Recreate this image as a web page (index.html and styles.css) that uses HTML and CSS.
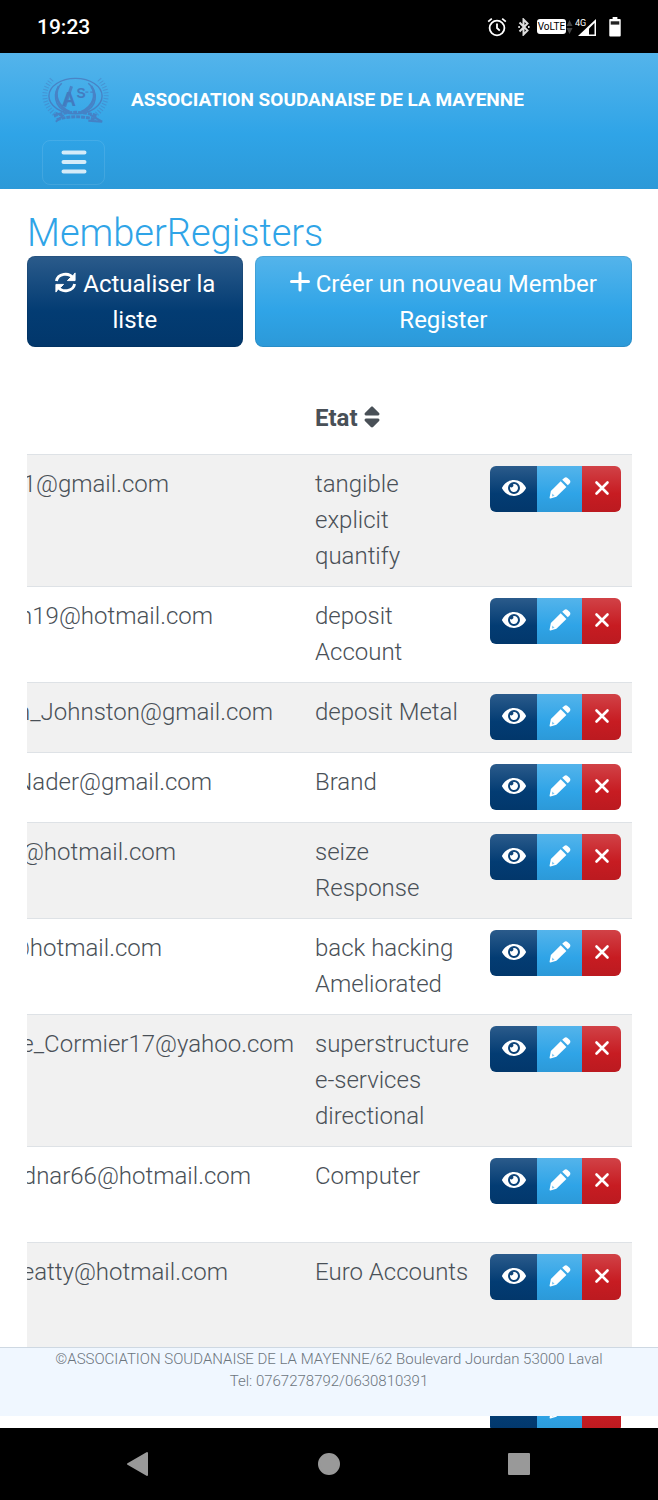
FILE: index.html
```html
<!DOCTYPE html>
<html lang="fr">
<head>
<meta charset="utf-8">
<meta name="viewport" content="width=device-width, initial-scale=1">
<title>MemberRegisters</title>
<link rel="stylesheet" href="styles.css">
</head>
<body>
<svg class="sprite" aria-hidden="true">
  <symbol id="eye" viewBox="0 0 576 512"><path d="M572.52 241.4C518.29 135.59 410.93 64 288 64S57.68 135.64 3.48 241.41a32.35 32.35 0 0 0 0 29.19C57.71 376.41 165.07 448 288 448s230.32-71.64 284.52-177.41a32.35 32.35 0 0 0 0-29.19zM288 400a144 144 0 1 1 144-144 143.93 143.93 0 0 1-144 144zm0-240a95.31 95.31 0 0 0-25.31 3.79 47.85 47.85 0 0 1-66.9 66.9A95.78 95.78 0 1 0 288 160z"/></symbol>
  <symbol id="pencil" viewBox="0 0 22 22"><path d="M11.700 4.200L17.400 9.900 7.400 19.700 1.500 21.500Q.4 21.600.6 20.400L1.900 14z"/><path d="M13.200 2.800L15.200.9q1.700-1.400 3.300 0L20.700 3.100q1.300 1.500 0 3.200L18.800 8.300z"/><path d="M3.200 16.500l2.300 2.300-2.500.8z" fill="#2fa4e7" opacity=".6"/></symbol>
  <symbol id="cross" viewBox="0 0 16 16"><path d="M2.5 2.5l11 11M13.5 2.5l-11 11" fill="none" stroke="currentColor" stroke-width="2.6" stroke-linecap="round"/></symbol>
</svg>

<div class="status-bar">
  <span class="clock">19:23</span>
  <div class="status-icons">
    <svg width="20" height="20" viewBox="0 0 20 20" fill="none" stroke="#fff" stroke-width="1.8"><circle cx="10" cy="11" r="7.4"/><path d="M10 6.5V11l2.8 2.6M1.2 4.6l3.6-3M18.8 4.6l-3.6-3"/></svg>
    <svg class="bluetooth" width="12" height="18" viewBox="0 0 12 18" fill="none" stroke="#ddd" stroke-width="2"><path d="M1.5 4.5l8 8-4 4v-15l4 4-8 8"/><path d="M.3 9h1.6M10 9h1.6" stroke-width="2"/></svg>
    <span class="volte">VoLTE</span>
    <svg width="7" height="18" viewBox="0 0 7 18" fill="#444"><path d="M3.5 2L6.500 8H.5zM3.500 16l3-6H.5z"/></svg>
    <svg class="signal" width="22" height="20" viewBox="0 0 22 20"><text class="network" x="0" y="9">4G</text><path d="M21 2v17H3z" fill="#fff"/><path d="M19.500 6v11.500H14V11.500z" fill="#000"/></svg>
    <svg class="battery" width="12" height="20" viewBox="0 0 12 21"><path d="M3.500 0h5v2H11q1 0 1 1v16.500q0 1-1 1H1q-1 0-1-1V3q0-1 1-1h2.500z" fill="#fff"/><path d="M1.500 4.500h9V8h-9z" fill="#222"/></svg>
  </div>
</div>

<div class="page">
  <header class="navbar">
    <a class="brand" href="#">
      <svg class="logo" width="67" height="50" viewBox="0 0 68 50" aria-hidden="true">
        <g fill="none" stroke="#4b72b8">
          <ellipse cx="34" cy="21" rx="27" ry="18" stroke-width="1.400"/>
          <path d="M20 8C10 17 12 33 26 37M47 8c11 9 9 25-5 29" stroke-width="1.600"/>
          <path d="M17 11c-5 9-1 21 11 26M50 11c6 9 2 21-10 26" stroke-width="2.400"/>
          <path d="M10 4C-2 17 2 32 16 42M58 4c12 13 8 28-6 38" stroke-width="5" stroke-dasharray="1 2" opacity=".6"/>
          <path d="M12 41q22-7 44 0M15 45q19-6 40 0" stroke-width="3" stroke-dasharray="4 1"/>
          <path d="M14 38l7 3-7 6M49 40l12 7-14-1" stroke-width="2"/>
          <path d="M44 17h3M49 17h3" stroke-width="1.500"/>
          <path d="M30 11l-7 21" stroke-width="3"/>
        </g>
        <text class="logo-a" x="20" y="31">A</text>
        <text class="logo-s" x="35" y="23">S</text>
      </svg>
      <span>ASSOCIATION SOUDANAISE DE LA MAYENNE</span>
    </a>
    <button class="toggler" type="button" aria-label="Menu">
      <svg width="26" height="24" viewBox="0 0 26 24" fill="none" stroke="currentColor" stroke-width="4" stroke-linecap="round"><path d="M2.500 2.500h21M2.500 12h21M2.500 21.500h21"/></svg>
    </button>
  </header>

  <main class="content">
    <h2 class="title">MemberRegisters</h2>
    <div class="toolbar">
      <button class="btn info" type="button"><svg class="icon" width="23" height="23" viewBox="0 0 24 24" fill="none" stroke="currentColor" stroke-width="3"><path d="M2.500 10.500A9.500 8.500 0 0 1 20 7.500M21.500 13.500A9.500 8.500 0 0 1 4 16.500"/><path d="M22 2v8h-8l3-3 2-1zM2 22v-8h8l-3 3-2 1z" fill="currentColor" stroke-width="1" stroke-linejoin="round"/></svg> Actualiser la liste</button>
      <button class="btn primary" type="button"><svg class="icon" width="20" height="24" viewBox="0 0 20 24" fill="none" stroke="currentColor" stroke-width="3" stroke-linecap="round"><path d="M10 3v17M1.500 11.500h17"/></svg> Créer un nouveau Member Register</button>
    </div>

    <table class="members">
      <thead>
        <tr><th class="email-col" aria-label="Email"></th><th class="state-col" scope="col">Etat <svg class="sort" width="16" height="24" viewBox="0 0 320 512" fill="currentColor"><path d="M137.400 41.400c12.500-12.500 32.800-12.500 45.300 0l128 128c9.200 9.200 11.900 22.900 6.900 34.900s-16.600 19.800-29.600 19.800L32 224c-12.900 0-24.600-7.800-29.600-19.800s-2.200-25.700 6.900-34.900l128-128zm0 429.300l-128-128c-9.200-9.200-11.900-22.900-6.900-34.900s16.600-19.800 29.600-19.800l256 0c12.900 0 24.600 7.800 29.600 19.800s2.200 25.700-6.900 34.900l-128 128c-12.500 12.500-32.800 12.500-45.300 0z"/></svg></th><th class="actions-col" aria-label="Actions"></th></tr>
      </thead>
      <tbody>
        <tr class="tall"><td><span class="email" style="width:142px">1@gmail.com</span></td><td>tangible explicit quantify</td><td><div class="actions"><button class="view" type="button" aria-label="Voir"><svg><use href="#eye"/></svg></button><button class="edit" type="button" aria-label="Editer"><svg><use href="#pencil"/></svg></button><button class="delete" type="button" aria-label="Supprimer"><svg><use href="#cross"/></svg></button></div></td></tr>
        <tr class="medium"><td><span class="email" style="width:186px">n19@hotmail.com</span></td><td>deposit Account</td><td><div class="actions"><button class="view" type="button" aria-label="Voir"><svg><use href="#eye"/></svg></button><button class="edit" type="button" aria-label="Editer"><svg><use href="#pencil"/></svg></button><button class="delete" type="button" aria-label="Supprimer"><svg><use href="#cross"/></svg></button></div></td></tr>
        <tr><td><span class="email" style="width:246px">n_Johnston@gmail.com</span></td><td>deposit Metal</td><td><div class="actions"><button class="view" type="button" aria-label="Voir"><svg><use href="#eye"/></svg></button><button class="edit" type="button" aria-label="Editer"><svg><use href="#pencil"/></svg></button><button class="delete" type="button" aria-label="Supprimer"><svg><use href="#cross"/></svg></button></div></td></tr>
        <tr><td><span class="email" style="width:185px">Nader@gmail.com</span></td><td>Brand</td><td><div class="actions"><button class="view" type="button" aria-label="Voir"><svg><use href="#eye"/></svg></button><button class="edit" type="button" aria-label="Editer"><svg><use href="#pencil"/></svg></button><button class="delete" type="button" aria-label="Supprimer"><svg><use href="#cross"/></svg></button></div></td></tr>
        <tr class="medium"><td><span class="email" style="width:149px">@hotmail.com</span></td><td>seize Response</td><td><div class="actions"><button class="view" type="button" aria-label="Voir"><svg><use href="#eye"/></svg></button><button class="edit" type="button" aria-label="Editer"><svg><use href="#pencil"/></svg></button><button class="delete" type="button" aria-label="Supprimer"><svg><use href="#cross"/></svg></button></div></td></tr>
        <tr class="medium"><td><span class="email" style="width:135px">@hotmail.com</span></td><td>back hacking Ameliorated</td><td><div class="actions"><button class="view" type="button" aria-label="Voir"><svg><use href="#eye"/></svg></button><button class="edit" type="button" aria-label="Editer"><svg><use href="#pencil"/></svg></button><button class="delete" type="button" aria-label="Supprimer"><svg><use href="#cross"/></svg></button></div></td></tr>
        <tr class="tall"><td><span class="email" style="width:267px">e_Cormier17@yahoo.com</span></td><td>superstructure e-services directional</td><td><div class="actions"><button class="view" type="button" aria-label="Voir"><svg><use href="#eye"/></svg></button><button class="edit" type="button" aria-label="Editer"><svg><use href="#pencil"/></svg></button><button class="delete" type="button" aria-label="Supprimer"><svg><use href="#cross"/></svg></button></div></td></tr>
        <tr class="medium"><td><span class="email" style="width:224px">dnar66@hotmail.com</span></td><td>Computer</td><td><div class="actions"><button class="view" type="button" aria-label="Voir"><svg><use href="#eye"/></svg></button><button class="edit" type="button" aria-label="Editer"><svg><use href="#pencil"/></svg></button><button class="delete" type="button" aria-label="Supprimer"><svg><use href="#cross"/></svg></button></div></td></tr>
        <tr class="tall"><td><span class="email" style="width:201px">eatty@hotmail.com</span></td><td>Euro Accounts</td><td><div class="actions"><button class="view" type="button" aria-label="Voir"><svg><use href="#eye"/></svg></button><button class="edit" type="button" aria-label="Editer"><svg><use href="#pencil"/></svg></button><button class="delete" type="button" aria-label="Supprimer"><svg><use href="#cross"/></svg></button></div></td></tr>
        <tr><td></td><td></td><td><div class="actions"><button class="view" type="button" aria-label="Voir"><svg><use href="#eye"/></svg></button><button class="edit" type="button" aria-label="Editer"><svg><use href="#pencil"/></svg></button><button class="delete" type="button" aria-label="Supprimer"><svg><use href="#cross"/></svg></button></div></td></tr>
      </tbody>
    </table>
  </main>

  <footer class="footer">
    <p>©ASSOCIATION SOUDANAISE DE LA MAYENNE/62 Boulevard Jourdan 53000 Laval</p>
    <p>Tel: 0767278792/0630810391</p>
  </footer>
</div>

<nav class="system-nav" aria-label="Navigation système">
  <button type="button" aria-label="Retour"><svg width="24" height="26" viewBox="0 0 24 26"><path d="M20 2v22L1 13z" stroke-linejoin="round"/></svg></button>
  <button type="button" aria-label="Accueil"><svg width="24" height="26" viewBox="0 0 24 26"><circle cx="12" cy="13" r="10"/></svg></button>
  <button type="button" aria-label="Applications"><svg width="24" height="26" viewBox="0 0 24 26"><path d="M2 3h20v20H2z" stroke-linejoin="round"/></svg></button>
</nav>
</body>
</html>
```

FILE: styles.css
```css
* { box-sizing: border-box; }

body {
  margin: 0;
  height: 100vh;
  display: flex;
  flex-direction: column;
  background: #fff;
  color: #495057;
  font: 300 24px/36px Roboto, sans-serif;
}

button { font: inherit; color: inherit; margin: 0; padding: 0; border: 0; background: none; }
.sprite { display: none; }

.status-bar {
  flex: none;
  height: 53px;
  padding: 0 37px;
  display: flex;
  align-items: center;
  justify-content: space-between;
  background: #000;
  color: #fff;
}
.clock { font-size: 21px; font-weight: 500; }
.status-icons { display: flex; align-items: center; }
.bluetooth { margin: 0 7px 0 11px; }
.volte {
  width: 29px;
  border-radius: 3px;
  background: #fff;
  color: #000;
  font-size: 10px;
  font-weight: 400;
  line-height: 15px;
  text-align: center;
}
.signal { margin-left: 2px; }
.network { font-size: 9px; font-weight: 400; fill: #fff; }
.battery { margin-left: 12px; }

.page { position: relative; flex: 1; min-height: 0; overflow: hidden; }

.navbar {
  padding: 20px 42px 4px;
  background: linear-gradient(#54b4eb, #2fa4e7 60%, #2c99d8);
  color: #fff;
}
.brand {
  display: flex;
  align-items: center;
  gap: 22px;
  height: 54px;
  margin-bottom: 13px;
  color: #fff;
  font-size: 19px;
  font-weight: 700;
  text-decoration: none;
}
.logo { flex: none; opacity: .7; }
.logo-a, .logo-s { font-family: "Liberation Sans", sans-serif; font-weight: 700; fill: #4468b0; }
.logo-a { font-size: 20px; }
.logo-s { font-size: 14px; }
.toggler {
  display: flex;
  align-items: center;
  justify-content: center;
  width: 63px;
  height: 45px;
  padding-bottom: 2px;
  border: 1px solid rgba(255, 255, 255, .1);
  border-radius: 8px;
  color: rgba(255, 255, 255, .8);
}

.content { padding: 22px 26px 0 27px; }
.title { margin: 0; color: #2fa4e7; font-size: 38px; font-weight: 300; line-height: 45px; }

.toolbar { display: grid; grid-template-columns: 4fr 7fr; gap: 12px; margin-bottom: 35px; }
.btn {
  padding: 10px 18px 9px;
  border-radius: 8px;
  box-shadow: inset 0 0 0 1px rgba(0, 0, 0, .08);
  color: #fff;
  font-weight: 400;
}
.icon { vertical-align: -2px; }
.info, .view { background: linear-gradient(#2b5b8b, #033c73 60%, #02376b); }
.primary, .edit { background: linear-gradient(#54b4eb, #2fa4e7 60%, #2c99d8); }
.delete { background: linear-gradient(#d14247, #c71c22 60%, #bb1a20); }

.members { width: 100%; border-collapse: collapse; table-layout: fixed; }
.members th, .members td { padding: 12px 8px 12px 12px; vertical-align: top; text-align: left; }
.members th { height: 72px; padding: 0 12px; vertical-align: middle; font-weight: 700; }
.members .state-col { width: 175px; }
.members .actions-col { width: 154px; }
.members td:first-child { padding-left: 0; }
.members td { height: 70px; box-shadow: inset 0 1px #dee2e6; }
.members .medium td { height: 96px; }
.members .tall td { height: 132px; }
.members tbody tr:nth-child(odd) { background: #f1f1f1; }
.sort { vertical-align: -3px; }

.email { display: flex; justify-content: flex-end; overflow: hidden; white-space: nowrap; }

.actions {
  display: grid;
  grid-template-columns: 47px 45px 39px;
  width: 131px;
  height: 46px;
  overflow: hidden;
  border-radius: 6px;
  color: #fff;
}
.actions button { display: flex; align-items: center; justify-content: center; padding-bottom: 2px; }
.actions svg { fill: currentColor; }
.view svg { width: 24px; height: 22px; }
.edit svg { width: 22px; height: 22px; }
.delete svg { width: 16px; height: 16px; }

.footer {
  position: absolute;
  left: 0;
  right: 0;
  bottom: 12px;
  height: 69px;
  border-top: 1px solid #ced8e2;
  background: #f0f7ff;
  color: #6c757d;
  font-size: 15px;
  line-height: 22px;
  text-align: center;
}
.footer p { margin: 0; }

.system-nav {
  flex: none;
  display: flex;
  align-items: center;
  justify-content: center;
  gap: 142px;
  height: 72px;
  background: #000;
}
.system-nav button { display: flex; align-items: center; justify-content: center; width: 48px; height: 48px; }
.system-nav svg { fill: #999; stroke: #999; stroke-width: 2; }
```
